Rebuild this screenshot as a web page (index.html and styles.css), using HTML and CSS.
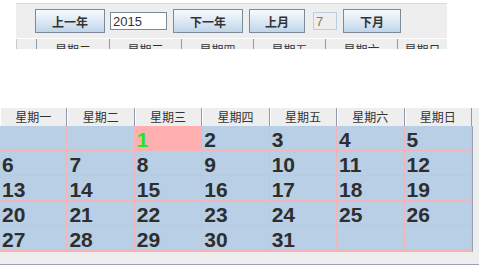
FILE: index.html
```html
<!DOCTYPE html>
<html>
<head>
<meta charset="utf-8">
<link rel="stylesheet" href="styles.css">
</head>
<body>
<div class="top">
  <div class="toolbar">
    <button class="btn w70">上一年</button>
    <input class="field year" value="2015">
    <button class="btn w70 g6">下一年</button>
    <button class="btn w56 g6">上月</button>
    <input class="field month" value="7" disabled>
    <button class="btn w58 g6">下月</button>
  </div>
  <div class="mini-head">
    <div class="mh c0">星期一</div>
    <div class="mh c1">星期二</div>
    <div class="mh c2">星期三</div>
    <div class="mh c2">星期四</div>
    <div class="mh c2">星期五</div>
    <div class="mh c2">星期六</div>
    <div class="mh c3">星期日</div>
  </div>
</div>
<div class="pane">
  <div class="table">
    <div class="head">
      <div class="hc">星期一</div><div class="hc">星期二</div><div class="hc">星期三</div><div class="hc">星期四</div><div class="hc">星期五</div><div class="hc">星期六</div><div class="hc">星期日</div>
    </div>
    <div class="grid">
      <div class="cell"></div><div class="cell"></div><div class="cell sel">1</div><div class="cell">2</div><div class="cell">3</div><div class="cell">4</div><div class="cell">5</div>
      <div class="cell">6</div><div class="cell">7</div><div class="cell">8</div><div class="cell">9</div><div class="cell">10</div><div class="cell">11</div><div class="cell">12</div>
      <div class="cell">13</div><div class="cell">14</div><div class="cell">15</div><div class="cell">16</div><div class="cell">17</div><div class="cell">18</div><div class="cell">19</div>
      <div class="cell">20</div><div class="cell">21</div><div class="cell">22</div><div class="cell">23</div><div class="cell">24</div><div class="cell">25</div><div class="cell">26</div>
      <div class="cell">27</div><div class="cell">28</div><div class="cell">29</div><div class="cell">30</div><div class="cell">31</div><div class="cell"></div><div class="cell"></div>
    </div>
  </div>
</div>
</body>
</html>
```
FILE: styles.css
```css
html, body {
  margin: 0;
  padding: 0;
  background: #ffffff;
  width: 479px;
  height: 265px;
  overflow: hidden;
}
body {
  font-family: "Liberation Sans", "Noto Sans CJK SC", sans-serif;
}
.top {
  margin-left: 16px;
  margin-top: 3px;
  width: 431px;
  background: #eeeeee;
  border-top: 1px solid #dcdcdc;
}
.toolbar {
  height: 34px;
  display: flex;
  align-items: center;
  padding-left: 19px;
  box-sizing: border-box;
}
.btn {
  height: 24px;
  margin: 0;
  padding: 0;
  border: 1px solid #7a8a99;
  background: linear-gradient(#f8fbfe, #dae7f3 55%, #bfd5ea);
  font-family: "Noto Sans CJK SC", sans-serif;
  font-weight: bold;
  font-size: 12px;
  color: #333333;
  box-sizing: border-box;
}
.w70 { width: 70px; }
.w56 { width: 56px; }
.w58 { width: 58px; }
.g6 { margin-left: 6px; }
.field {
  height: 18px;
  margin: 0;
  padding: 0 0 0 2px;
  box-sizing: border-box;
  font-family: "Liberation Sans", sans-serif;
  font-size: 13px;
  color: #333333;
  outline: none;
}
.year {
  width: 57px;
  margin-left: 5px;
  border: 1px solid #7a8a99;
  background: #ffffff;
}
.month {
  width: 24px;
  margin-left: 8px;
  border: 1px solid #b8cfe5;
  background: #eeeeee;
  color: #8a7a66;
}
.month + .btn { margin-left: 6px; }
.mini-head {
  display: flex;
  height: 10px;
  overflow: hidden;
  border-top: 1px solid #ffffff;
}
.mh {
  flex: none;
  height: 18px;
  line-height: 21px;
  text-align: center;
  font-family: "Noto Sans CJK SC", sans-serif;
  font-size: 12px;
  color: #333333;
  border-right: 1px solid #8c9cb0;
  box-sizing: border-box;
  overflow: hidden;
  white-space: nowrap;
}
.c0 { width: 21px; color: transparent; border-left: 1px solid #c8ccd0; }
.c1 { width: 73px; }
.c2 { width: 72px; }
.c3 { flex: 1; border-right: none; }
.pane {
  margin-top: 59px;
  width: 479px;
  height: 157px;
  background: #eeeeee;
  border-bottom: 1px solid #9aa3ad;
  box-sizing: border-box;
}
.table {
  width: 474px;
  background: #eeeeee;
}
.head {
  display: grid;
  grid-template-columns: repeat(7, 67.43px);
  height: 18px;
}
.hc {
  height: 18px;
  line-height: 18px;
  text-align: center;
  font-family: "Noto Sans CJK SC", sans-serif;
  font-size: 12px;
  color: #333333;
  background: #eeeeee;
  border-right: 1px solid #8c9cb0;
  box-shadow: inset 1px 0 0 #ffffff;
  box-sizing: border-box;
}
.grid {
  display: grid;
  grid-template-columns: repeat(7, 67.43px);
  width: 473px;
  border-bottom: 1px solid #f2b4b8;
  border-right: 1px solid #9aa3ad;
  box-sizing: border-box;
}
.cell {
  height: 25px;
  padding: 1px 0 0 2px;
  line-height: 25px;
  box-sizing: border-box;
  overflow: hidden;
  background: #b8cfe5;
  border-right: 1px solid #f2b4b8;
  border-bottom: 1px solid #f2b4b8;
  font-family: "Liberation Sans", sans-serif;
  font-weight: bold;
  font-size: 21px;
  color: #2e2e2e;
}
.sel {
  background: #ffafaf;
  color: #1ee81e;
}
```
